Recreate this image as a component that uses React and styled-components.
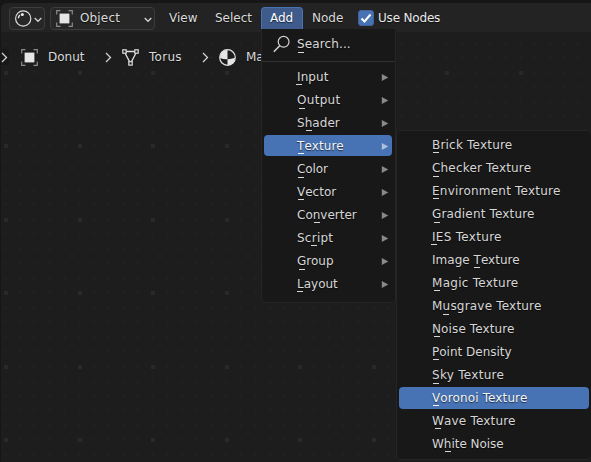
import React from "react";
import styled, { createGlobalStyle } from "styled-components";

const GlobalStyle = createGlobalStyle`
  * { box-sizing: border-box; }
  body { margin: 0; background: #161616; overflow: hidden; }
`;

const Editor = styled.div`
  position: relative;
  width: 591px;
  height: 462px;
  padding: 3px 0 0 1px;
  overflow: hidden;
  background: #161616;
  color: #dadada;
  font: 12px "DejaVu Sans", sans-serif;
  text-shadow: 0 1px 1px rgba(0, 0, 0, 0.6);
  white-space: pre;
  cursor: default;
`;

const Header = styled.header`
  display: flex;
  align-items: center;
  height: 29px;
  padding: 1px 0 0 8px;
  border-radius: 6px 0 0 0;
  background: #232323;
`;

const Dropdown = styled.div`
  display: flex;
  align-items: center;
  width: ${(p) => p.$width}px;
  height: 23px;
  margin-right: ${(p) => p.$gap || 0}px;
  padding: 0 ${(p) => p.$right}px 0 5px;
  border: 1px solid #3c3c3c;
  border-radius: 4px;
  background: #272727;
`;

const DropdownLabel = styled.span`
  flex: 1;
  margin-left: 7px;
  line-height: 21px;
  letter-spacing: 0.15px;
`;

const DropdownArrow = styled.span`
  display: flex;
  padding-top: 3px;
  margin-left: auto;
`;

const MenuTitle = styled.div`
  width: ${(p) => p.$width}px;
  height: 23px;
  padding-left: ${(p) => p.$pad}px;
  line-height: 22px;
`;

const ActiveTitle = styled(MenuTitle)`
  border: 1px solid #4772b3;
  border-bottom: 0;
  border-radius: 4px 4px 0 0;
  background: #3e5b8b;
  color: #fff;
  line-height: 20px;
`;

const Toggle = styled.div`
  display: flex;
  align-items: center;
  gap: 4px;
  color: #e8e8e8;
  line-height: 22px;
  letter-spacing: -0.18px;
`;

const Check = styled.span`
  display: flex;
  width: 16px;
  height: 16px;
  border: 1px solid #416298;
  border-radius: 3px;
  background: #4772b3;
`;

const Canvas = styled.main`
  position: relative;
  height: 430px;
  background: #1d1d1d;
`;

const Dots = styled.svg`
  position: absolute;
  inset: 0;
`;

const Path = styled.nav`
  position: relative;
  display: flex;
  align-items: center;
  height: 50px;
`;

const Crumb = styled.div`
  display: flex;
  align-items: center;
  width: ${(p) => p.$width}px;
  gap: 10px;
  line-height: 20px;
  letter-spacing: ${(p) => p.$track || 0}px;
`;

const Separator = styled.span`
  display: flex;
  width: ${(p) => p.$width}px;
  padding-top: 1px;
`;

const RegionHandle = styled.span`
  display: flex;
  align-items: center;
  width: 8px;
  height: 16px;
  margin-right: 12px;
  padding-top: 1px;
  border-radius: 0 4px 4px 0;
  background: #181818;
`;

const Menu = styled.ul`
  position: absolute;
  left: ${(p) => p.$x}px;
  top: ${(p) => p.$y}px;
  width: ${(p) => p.$width}px;
  height: ${(p) => p.$height}px;
  margin: 0;
  padding: ${(p) => p.$top}px ${(p) => (p.$attached ? 3 : 2)}px 0 2px;
  list-style: none;
  background: #181818;
  border: 1px solid #252525;
  border-radius: ${(p) => (p.$attached ? "0 0 5px 5px" : "5px")};
  border-top-color: ${(p) => (p.$attached ? "#181818" : "#252525")};
`;

const Item = styled.li`
  display: flex;
  align-items: center;
  justify-content: space-between;
  height: ${(p) => p.$height}px;
  margin-bottom: ${(p) => 23 - p.$height}px;
  padding: 0 3px 0 33px;
  border-radius: 4px;
  line-height: 18px;
  color: ${(p) => (p.$active ? "#f4f4f4" : "#d6d6d6")};
  background: ${(p) => (p.$active ? "#4772b3" : "transparent")};
`;

const ItemText = styled.span`
  letter-spacing: ${(p) => p.$track || 0}px;
`;

const ItemArrow = styled.span`
  display: flex;
  padding-top: 2px;
`;

const SearchRow = styled.li`
  display: flex;
  align-items: center;
  gap: 6px;
  height: 31px;
  margin: 0 -3px 4px -2px;
  padding: 0 0 4px 11px;
  border-bottom: 1px solid #303030;
`;

const Key = styled.span`
  position: relative;
  &::after {
    content: "";
    position: absolute;
    left: calc(50% - 3px);
    top: ${(p) => (p.$low ? 15 : 14)}px;
    width: 6px;
    height: 1px;
    background: currentColor;
  }
`;

const Arrow = () => (
  <svg width="8" height="9" viewBox="0 0 8 9">
    <path d="M.8 1L7.3 4.5L.8 8Z" fill="currentColor" opacity="0.6" />
  </svg>
);

const Chevron = ({ down }) =>
  down ? (
    <svg width="8" height="6" viewBox="0 0 8 6">
      <path d="M.7 1L4 4.3L7.3 1" fill="none" stroke="#d2d2d2" strokeWidth="1.3" />
    </svg>
  ) : (
    <svg width="7" height="11" viewBox="0 0 7 11">
      <path d="M1 1L5.5 5.5L1 10" fill="none" stroke="#d2d2d2" strokeWidth="1.3" />
    </svg>
  );

const ShadingIcon = () => (
  <svg width="17" height="17" viewBox="0 0 17 17">
    <circle cx="8.2" cy="8.5" r="7.6" fill="none" stroke="#dedede" strokeWidth="1.2" />
    <path d="M3.4 8.2A5 5 0 0 1 4.8 5" fill="none" stroke="#eee" strokeWidth="1.4" />
    <circle cx="7.3" cy="4.5" r="1.5" fill="#eee" />
  </svg>
);

const ObjectIcon = () => (
  <svg width="17" height="17" viewBox="0 0 17 17">
    <path
      d="M.7 4.5V.7H4.5M12.5 .7H16.3V4.5M16.3 12.5V16.3H12.5M4.5 16.3H.7V12.5"
      fill="none"
      stroke="#8b8b8b"
      strokeWidth="1.2"
    />
    <rect x="3.6" y="3.6" width="9.8" height="9.8" fill="#e6e6e6" />
  </svg>
);

const MeshIcon = () => (
  <svg width="17" height="17" viewBox="0 0 17 17">
    <path d="M4 2.5H13M3 4L7.5 12.6M14 4L9.5 12.6" stroke="#dedede" strokeWidth="1.3" />
    <g fill="#1d1d1d" stroke="#dedede" strokeWidth="1.2">
      <rect x=".8" y=".8" width="3.4" height="3.4" />
      <rect x="12.8" y=".8" width="3.4" height="3.4" />
      <rect x="6.8" y="12.7" width="3.4" height="3.4" />
    </g>
  </svg>
);

const MaterialIcon = () => (
  <svg width="17" height="17" viewBox="0 0 17 17">
    <circle cx="8.5" cy="8.5" r="7.8" fill="#1d1d1d" stroke="#e2e2e2" strokeWidth="1.2" />
    <path
      d="M8.5 .8A7.7 7.7 0 0 0 1 9Q4.5 10.4 8.5 10.2ZM8.5 10.2Q12.5 10.1 16 8.7A7.7 7.7 0 0 1 8.5 16.2Z"
      fill="#e6e6e6"
    />
  </svg>
);

const SearchIcon = () => (
  <svg width="18" height="18" viewBox="0 0 18 18">
    <circle cx="10.6" cy="6.8" r="5.4" fill="none" stroke="#cfcfcf" strokeWidth="1.2" />
    <path d="M6.7 10.8L.8 16.8" stroke="#cfcfcf" strokeWidth="1.6" />
  </svg>
);

// Each label marks its shortcut letter with a leading "_".
const Label = ({ text }) => {
  const at = text.indexOf("_");
  const key = text[at + 1];
  return (
    <>
      {text.slice(0, at)}
      <Key $low={"COGSu".includes(key)}>{key}</Key>
      {text.slice(at + 2)}
    </>
  );
};

// Menu entries: label and letter spacing.
const addItems = [
  ["_Input", 0.1],
  ["_Output", 0.3],
  ["S_hader", 0.05],
  ["_Texture", 0.1],
  ["_Color", -0.1],
  ["_Vector", 0],
  ["Co_nverter", 0],
  ["Sc_ript", 0.25],
  ["_Group", 0],
  ["_Layout", 0],
];

const textureItems = [
  ["_Brick Texture", 0.2],
  ["_Checker Texture", 0.18],
  ["_Environment Texture", 0.22],
  ["_Gradient Texture", 0.16],
  ["_IES Texture", 0.3],
  ["Image _Texture", 0.02],
  ["_Magic Texture", 0.27],
  ["M_usgrave Texture", 0.2],
  ["_Noise Texture", 0.12],
  ["_Point Density", 0],
  ["_Sky Texture", 0.29],
  ["_Voronoi Texture", 0.12],
  ["_Wave Texture", 0.18],
  ["W_hite Noise", -0.03],
];

const MAJOR_STEP = 73.5;
const MINOR_STEP = 14.7;

const GridDots = () => {
  const dots = [];
  for (let row = 0; row < 29; row++) {
    for (let col = 0; col < 41; col++) {
      const major = row % 5 === 2 && col % 5 === 0;
      const x = Math.round(3 + (major ? (col / 5) * MAJOR_STEP : col * MINOR_STEP));
      const y = Math.round(9.5 + row * MINOR_STEP);
      dots.push(
        <rect
          key={`${row}-${col}`}
          x={x}
          y={y}
          width={major ? 4 : 3}
          height={major ? 4 : 3}
          fill={major ? "#292929" : "#202020"}
        />
      );
    }
  }
  return (
    <Dots width="590" height="430" shapeRendering="crispEdges">
      {dots}
    </Dots>
  );
};

export default function App() {
  return (
    <>
      <GlobalStyle />
      <Editor>
        <Header>
          <Dropdown $width={36} $right={2} $gap={5}>
            <ShadingIcon />
            <DropdownArrow><Chevron down /></DropdownArrow>
          </Dropdown>
          <Dropdown $width={105} $right={2} $gap={14}>
            <ObjectIcon />
            <DropdownLabel>Object</DropdownLabel>
            <DropdownArrow><Chevron down /></DropdownArrow>
          </Dropdown>
          <MenuTitle $width={46} $pad={0}>View</MenuTitle>
          <MenuTitle $width={46} $pad={0}>Select</MenuTitle>
          <ActiveTitle $width={42} $pad={8}>Add</ActiveTitle>
          <MenuTitle $width={55} $pad={9}>Node</MenuTitle>
          <Toggle>
            <Check>
              <svg width="14" height="14" viewBox="0 0 14 14">
                <path d="M2.5 7.5L5.5 10.5L11.5 3.5" fill="none" stroke="#fff" strokeWidth="2" />
              </svg>
            </Check>
            Use Nodes
          </Toggle>
        </Header>
        <Canvas>
          <GridDots />
          <Path>
            <RegionHandle><Chevron /></RegionHandle>
            <Crumb $width={84}><ObjectIcon />Donut</Crumb>
            <Separator $width={17}><Chevron /></Separator>
            <Crumb $width={80} $track={0.3}><MeshIcon />Torus</Crumb>
            <Separator $width={17}><Chevron /></Separator>
            <Crumb $width={80}><MaterialIcon />Material</Crumb>
          </Path>
        </Canvas>
        <Menu $x={261} $y={29} $width={135} $height={274} $top={1} $attached>
          <SearchRow>
            <SearchIcon />
            <ItemText $track={0.12}><Label text="_Search..." /></ItemText>
          </SearchRow>
          {addItems.map(([text, track]) => (
            <Item key={text} $height={21} $active={text === "_Texture"}>
              <ItemText $track={track}><Label text={text} /></ItemText>
              <ItemArrow><Arrow /></ItemArrow>
            </Item>
          ))}
        </Menu>
        <Menu $x={396} $y={130} $width={196} $height={330} $top={3}>
          {textureItems.map(([text, track]) => (
            <Item key={text} $height={22} $active={text === "_Voronoi Texture"}>
              <ItemText $track={track}><Label text={text} /></ItemText>
            </Item>
          ))}
        </Menu>
      </Editor>
    </>
  );
}
